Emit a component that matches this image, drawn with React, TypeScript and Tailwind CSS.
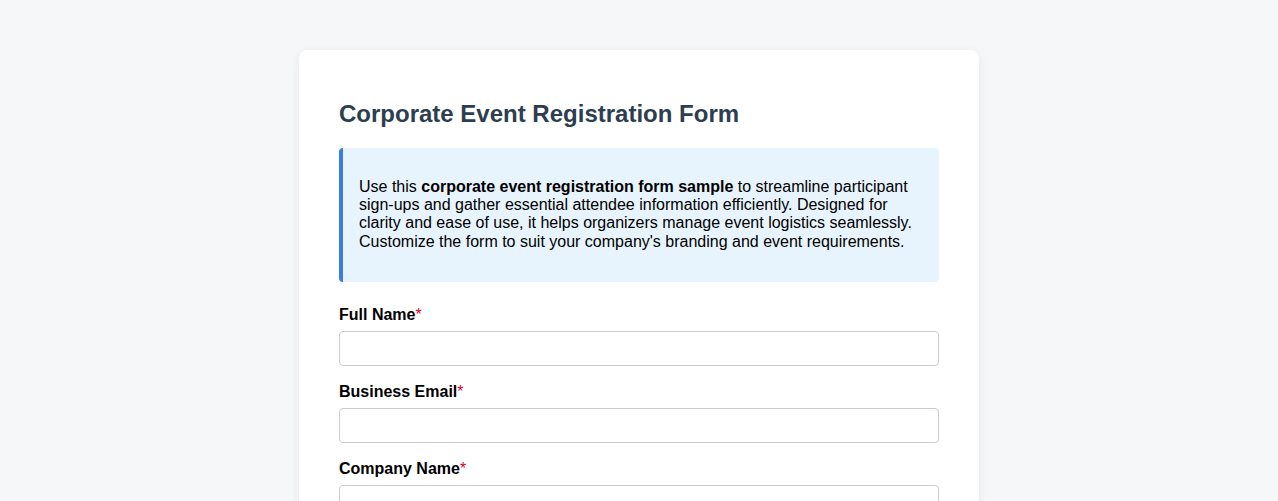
import React from 'react';

const fields = ['Full Name', 'Business Email', 'Company Name', 'Job Title', 'Phone Number'];

function Field({ label }: { label: string }) {
  return (
    <div className="mb-[17px]">
      <label className="block mb-[7px] font-bold text-[16px] leading-[18px] text-black">
        {label}
        <span className="font-normal text-[#e0001b]">*</span>
      </label>
      <input
        type="text"
        className="block w-full h-[35px] px-[10px] border border-[#cccccc] rounded-[4px] bg-white text-[16px] outline-none"
      />
    </div>
  );
}

export default function App() {
  return (
    <div
      className="min-h-screen bg-[#f6f7f9] pt-[50px] pb-[40px]"
      style={{ fontFamily: '"Liberation Sans", Arial, sans-serif' }}
    >
      <div className="mx-auto w-[680px] bg-white rounded-[8px] shadow-[0_2px_10px_rgba(0,0,0,0.07)] px-[40px] pt-[50px] pb-[40px]">
        <h1 className="text-[24px] leading-[1.15] font-bold text-[#2c3e50] mb-[20px]">
          Corporate Event Registration Form
        </h1>
        <div className="bg-[#e8f4fd] border-l-4 border-[#3b7ddd] rounded-[4px] pl-[16px] pr-[16px] pt-[30px] pb-[31px] mb-[24px]">
          <p className="text-[16px] leading-[1.15] text-black">
            Use this <strong>corporate event registration form sample</strong> to streamline participant
            sign-ups and gather essential attendee information efficiently. Designed for clarity and ease
            of use, it helps organizers manage event logistics seamlessly. Customize the form to suit your
            company's branding and event requirements.
          </p>
        </div>
        {fields.map((f) => (
          <Field key={f} label={f} />
        ))}
      </div>
    </div>
  );
}
